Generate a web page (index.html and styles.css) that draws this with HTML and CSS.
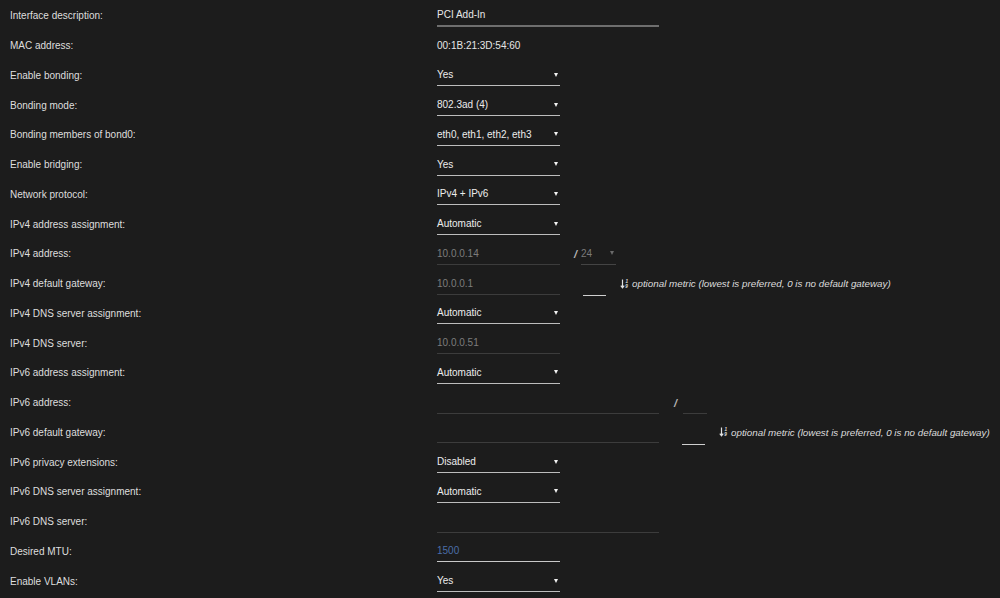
FILE: index.html
```html
<!DOCTYPE html>
<html lang="en">
<head>
<meta charset="UTF-8" />
<title>Interface settings</title>
<link rel="stylesheet" href="styles.css">
</head>
<body>
  <div class="form" role="main" aria-label="Interface settings">
    <div class="row">
      <div class="label">Interface description:</div>
      <div class="field"><span class="input wide strong">PCI Add-In</span></div>
    </div>
    <div class="row">
      <div class="label">MAC address:</div>
      <div class="field"><span class="plain">00:1B:21:3D:54:60</span></div>
    </div>
    <div class="row">
      <div class="label">Enable bonding:</div>
      <div class="field"><span class="select">Yes<i class="caret"></i></span></div>
    </div>
    <div class="row">
      <div class="label">Bonding mode:</div>
      <div class="field"><span class="select">802.3ad (4)<i class="caret"></i></span></div>
    </div>
    <div class="row">
      <div class="label">Bonding members of bond0:</div>
      <div class="field"><span class="select">eth0, eth1, eth2, eth3<i class="caret"></i></span></div>
    </div>
    <div class="row">
      <div class="label">Enable bridging:</div>
      <div class="field"><span class="select">Yes<i class="caret"></i></span></div>
    </div>
    <div class="row">
      <div class="label">Network protocol:</div>
      <div class="field"><span class="select">IPv4 + IPv6<i class="caret"></i></span></div>
    </div>
    <div class="row">
      <div class="label">IPv4 address assignment:</div>
      <div class="field"><span class="select">Automatic<i class="caret"></i></span></div>
    </div>
    <div class="row">
      <div class="label">IPv4 address:</div>
      <div class="field">
        <span class="input disabled">10.0.0.14</span>
        <span class="slash">/</span>
        <span class="select prefix disabled">24<i class="caret dim"></i></span>
      </div>
    </div>
    <div class="row">
      <div class="label">IPv4 default gateway:</div>
      <div class="field">
        <span class="input disabled">10.0.0.1</span>
        <span class="metric"></span>
        <span class="hint">
          <svg class="sort-icon" viewBox="0 0 10 10" aria-hidden="true">
            <path d="M2.5 0.5v8M0.8 6.6l1.7 2.2 1.7-2.2" fill="none" stroke="currentColor" stroke-width="1.2"/>
            <text x="5.4" y="4.2" font-size="4.6" font-weight="bold" fill="currentColor">1</text>
            <text x="5.2" y="9.4" font-size="4.6" font-weight="bold" fill="currentColor">9</text>
          </svg>
          optional metric (lowest is preferred, 0 is no default gateway)
        </span>
      </div>
    </div>
    <div class="row">
      <div class="label">IPv4 DNS server assignment:</div>
      <div class="field"><span class="select">Automatic<i class="caret"></i></span></div>
    </div>
    <div class="row">
      <div class="label">IPv4 DNS server:</div>
      <div class="field"><span class="input disabled">10.0.0.51</span></div>
    </div>
    <div class="row">
      <div class="label">IPv6 address assignment:</div>
      <div class="field"><span class="select">Automatic<i class="caret"></i></span></div>
    </div>
    <div class="row">
      <div class="label">IPv6 address:</div>
      <div class="field">
        <span class="input wide disabled"></span>
        <span class="slash v6">/</span>
        <span class="input prefix6 disabled"></span>
      </div>
    </div>
    <div class="row">
      <div class="label">IPv6 default gateway:</div>
      <div class="field">
        <span class="input wide disabled"></span>
        <span class="metric"></span>
        <span class="hint">
          <svg class="sort-icon" viewBox="0 0 10 10" aria-hidden="true">
            <path d="M2.5 0.5v8M0.8 6.6l1.7 2.2 1.7-2.2" fill="none" stroke="currentColor" stroke-width="1.2"/>
            <text x="5.4" y="4.2" font-size="4.6" font-weight="bold" fill="currentColor">1</text>
            <text x="5.2" y="9.4" font-size="4.6" font-weight="bold" fill="currentColor">9</text>
          </svg>
          optional metric (lowest is preferred, 0 is no default gateway)
        </span>
      </div>
    </div>
    <div class="row">
      <div class="label">IPv6 privacy extensions:</div>
      <div class="field"><span class="select">Disabled<i class="caret"></i></span></div>
    </div>
    <div class="row">
      <div class="label">IPv6 DNS server assignment:</div>
      <div class="field"><span class="select">Automatic<i class="caret"></i></span></div>
    </div>
    <div class="row">
      <div class="label">IPv6 DNS server:</div>
      <div class="field"><span class="input wide disabled"></span></div>
    </div>
    <div class="row">
      <div class="label">Desired MTU:</div>
      <div class="field"><span class="input placeholder">1500</span></div>
    </div>
    <div class="row">
      <div class="label">Enable VLANs:</div>
      <div class="field"><span class="select">Yes<i class="caret"></i></span></div>
    </div>
  </div>
</body>
</html>
```

FILE: styles.css
```css
/* Reset */
*, *:before, *:after {
  box-sizing: border-box;
}

body {
  margin: 0;
  background: #1c1c1c;
  color: #dcdcdc;
  font-family: 'Liberation Sans', Arial, sans-serif;
  font-size: 10px;
}

.form {
  padding-left: 10px;
  padding-top: 1px;
}

.row {
  display: grid;
  grid-template-columns: 427px 1fr;
  align-items: center;
  height: 29.75px;
}

.label {
  color: #dedede;
}

.field {
  display: flex;
  align-items: center;
}

/* Text inputs */
.input {
  display: block;
  width: 123px;
  height: 22px;
  line-height: 21px;
  border-bottom: 1px solid #4a4a4a;
  color: #e8e8e8;
}

.input.wide {
  width: 222px;
}

.input.strong {
  border-bottom: 2px solid #6e6e6e;
  height: 23px;
  line-height: 21px;
}

.input.disabled {
  color: #7c7c7c;
  border-bottom-color: #3c3c3c;
}

.input.placeholder {
  color: #4b6ea8;
  border-bottom-color: #c8c8c8;
}

.plain {
  color: #e6e6e6;
}

/* Selects */
.select {
  display: flex;
  justify-content: space-between;
  align-items: center;
  width: 123px;
  height: 22px;
  padding-right: 2px;
  border-bottom: 1px solid #bdbdbd;
  color: #ececec;
}

.select.prefix {
  width: 35px;
  color: #7a7a7a;
  border-bottom-color: #444;
}

.caret {
  width: 0;
  height: 0;
  border-left: 2.5px solid transparent;
  border-right: 2.5px solid transparent;
  border-top: 4px solid #f2f2f2;
}

.caret.dim {
  border-top-color: #6a6a6a;
}

.slash {
  margin-left: 14px;
  margin-right: 4px;
  font-weight: bold;
  font-style: italic;
  font-size: 11px;
  color: #b5b5b5;
}

.slash.v6 {
  margin-left: 15px;
  margin-right: 6px;
}

.input.prefix6 {
  width: 24px;
}

/* Metric field + hint */
.metric {
  display: block;
  width: 23px;
  height: 22px;
  margin-left: 23px;
  margin-top: 3px;
  border-bottom: 1px solid #cfcfcf;
}

.hint {
  display: flex;
  align-items: center;
  margin-left: 14px;
  font-style: italic;
  font-size: 9.8px;
  color: #dcdcdc;
}

.sort-icon {
  width: 10px;
  height: 10px;
  margin-right: 2px;
  color: #e0e0e0;
  font-family: 'Liberation Sans', Arial, sans-serif;
}
```
